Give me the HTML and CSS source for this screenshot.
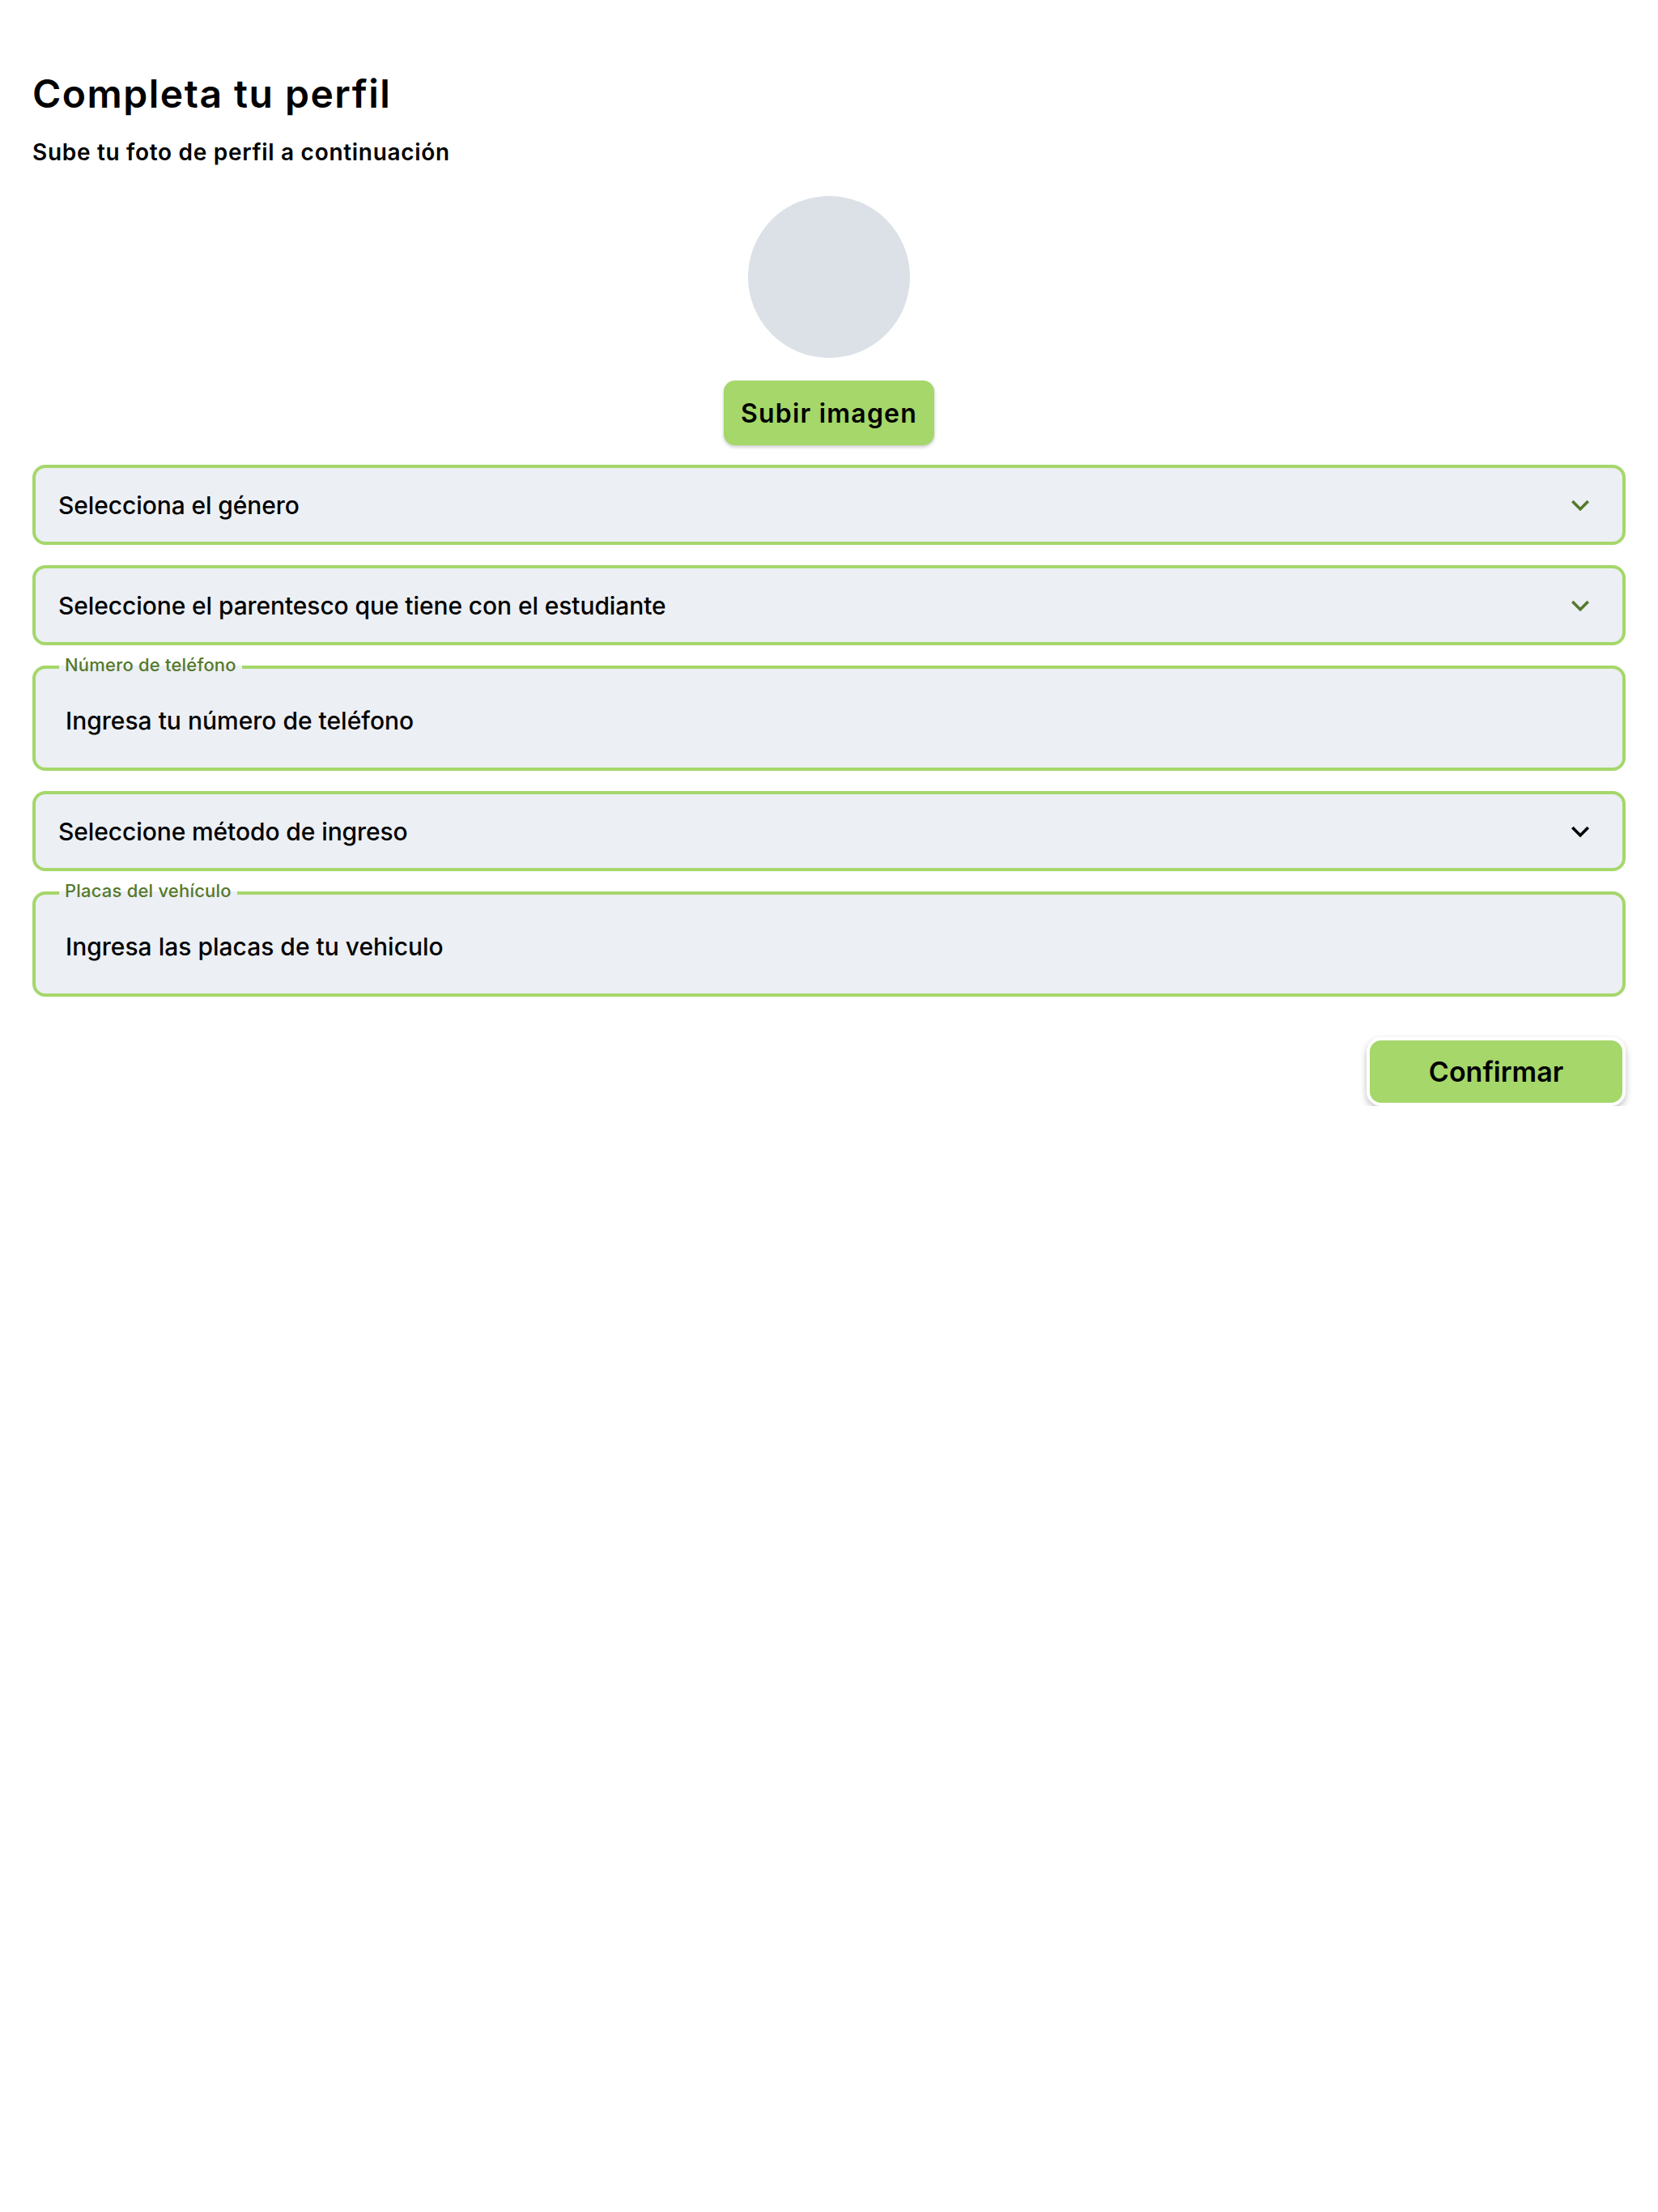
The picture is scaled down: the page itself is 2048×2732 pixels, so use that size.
FILE: index.html
```html
<!DOCTYPE html>
<html lang="es">
<head>
<meta charset="utf-8">
<title>Completa tu perfil</title>
<link rel="stylesheet" href="styles.css">
</head>
<body>
<main class="page">
  <h1 class="title">Completa tu perfil</h1>
  <p class="subtitle">Sube tu foto de perfil a continuación</p>

  <section class="photo">
    <div class="avatar"></div>
    <button class="upload" type="button">Subir imagen</button>
  </section>

  <form class="form">
    <div class="select">
      <span>Selecciona el género</span>
      <svg class="chevron chevron-green" viewBox="0 0 24 24"><path d="M16.59 8.59 12 13.17 7.41 8.59 6 10l6 6 6-6z"/></svg>
    </div>

    <div class="select">
      <span>Seleccione el parentesco que tiene con el estudiante</span>
      <svg class="chevron chevron-green" viewBox="0 0 24 24"><path d="M16.59 8.59 12 13.17 7.41 8.59 6 10l6 6 6-6z"/></svg>
    </div>

    <fieldset class="field">
      <legend>Número de teléfono</legend>
      <div class="value">Ingresa tu número de teléfono</div>
    </fieldset>

    <div class="select">
      <span>Seleccione método de ingreso</span>
      <svg class="chevron" viewBox="0 0 24 24"><path d="M16.59 8.59 12 13.17 7.41 8.59 6 10l6 6 6-6z"/></svg>
    </div>

    <fieldset class="field">
      <legend>Placas del vehículo</legend>
      <div class="value">Ingresa las placas de tu vehiculo</div>
    </fieldset>
  </form>

  <div class="actions">
    <button class="confirm" type="button">Confirmar</button>
  </div>
</main>
</body>
</html>
```

FILE: styles.css
```css
* {
  box-sizing: border-box;
}

html, body {
  margin: 0;
  background: #ffffff;
}

body {
  font-family: "Inter", "Noto Sans", "Liberation Sans", sans-serif;
  color: #000000;
}

.page {
  padding: 88px 40px 0;
}

.title {
  margin: 0;
  font-size: 48px;
  line-height: 56px;
  font-weight: 600;
  letter-spacing: 1.5px;
}

.subtitle {
  margin: 27px 0 0;
  font-size: 28px;
  line-height: 34px;
  font-weight: 600;
  letter-spacing: 0.7px;
}

/* profile picture */
.photo {
  margin-top: 37px;
  display: flex;
  flex-direction: column;
  align-items: center;
  gap: 28px;
}

.avatar {
  width: 200px;
  height: 200px;
  border-radius: 50%;
  background: #dbe1e6;
}

.upload {
  width: 260px;
  height: 80px;
  border: none;
  border-radius: 14px;
  background: #a5d76a;
  box-shadow: 0 2px 4px rgba(0, 0, 0, 0.22);
  font-family: inherit;
  font-size: 32px;
  font-weight: 600;
  letter-spacing: 1.2px;
  color: #000000;
  padding: 0;
}

/* form controls */
.form {
  margin-top: 24px;
  display: flex;
  flex-direction: column;
  gap: 25px;
}

.select {
  height: 99px;
  border: 4px solid #a5d76a;
  border-radius: 16px;
  background: #eceff4;
  display: flex;
  align-items: center;
  justify-content: space-between;
  padding: 0 30px 0 28px;
  font-size: 30px;
  font-weight: 500;
  letter-spacing: -0.1px;
}

.chevron {
  width: 44px;
  height: 44px;
  fill: #000000;
}

.chevron-green {
  fill: #55792b;
}

.field {
  margin: -12px 0 0;
  min-width: 0;
  border: 4px solid #a5d76a;
  border-radius: 16px;
  background: #eceff4;
  padding: 0 0 0 29px;
}

.field legend {
  padding: 0 7px 6px;
  font-size: 22px;
  line-height: 22px;
  font-weight: 500;
  letter-spacing: 0.2px;
  color: #55792b;
}

.value {
  height: 110px;
  display: flex;
  align-items: center;
  padding: 0 0 6px 8px;
  font-size: 30px;
  font-weight: 500;
}

/* footer action */
.actions {
  margin-top: 50px;
  display: flex;
  justify-content: flex-end;
}

.confirm {
  width: 320px;
  height: 85px;
  border: 4px solid #ffffff;
  border-radius: 18px;
  background: #a5d76a;
  box-shadow: 0 4px 8px rgba(0, 0, 0, 0.25);
  font-family: inherit;
  font-size: 34px;
  font-weight: 600;
  color: #000000;
  padding: 0;
}
```
